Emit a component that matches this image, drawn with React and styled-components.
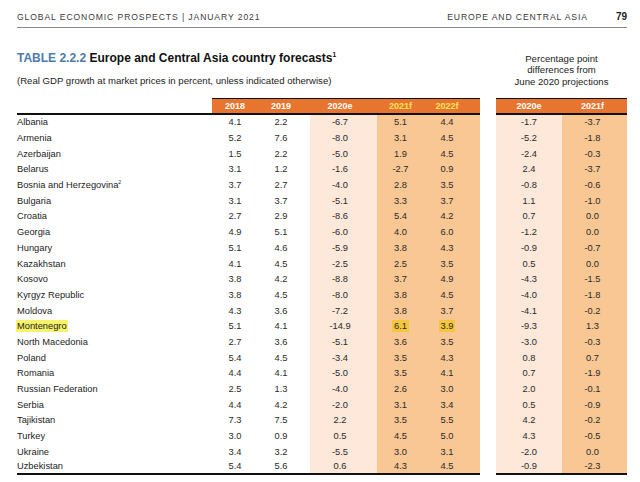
import React from 'react'
import styled, { createGlobalStyle, css } from 'styled-components'

const rows = [
  ['Albania', '4.1', '2.2', '-6.7', '5.1', '4.4', '-1.7', '-3.7'],
  ['Armenia', '5.2', '7.6', '-8.0', '3.1', '4.5', '-5.2', '-1.8'],
  ['Azerbaijan', '1.5', '2.2', '-5.0', '1.9', '4.5', '-2.4', '-0.3'],
  ['Belarus', '3.1', '1.2', '-1.6', '-2.7', '0.9', '2.4', '-3.7'],
  ['Bosnia and Herzegovina', '3.7', '2.7', '-4.0', '2.8', '3.5', '-0.8', '-0.6'],
  ['Bulgaria', '3.1', '3.7', '-5.1', '3.3', '3.7', '1.1', '-1.0'],
  ['Croatia', '2.7', '2.9', '-8.6', '5.4', '4.2', '0.7', '0.0'],
  ['Georgia', '4.9', '5.1', '-6.0', '4.0', '6.0', '-1.2', '0.0'],
  ['Hungary', '5.1', '4.6', '-5.9', '3.8', '4.3', '-0.9', '-0.7'],
  ['Kazakhstan', '4.1', '4.5', '-2.5', '2.5', '3.5', '0.5', '0.0'],
  ['Kosovo', '3.8', '4.2', '-8.8', '3.7', '4.9', '-4.3', '-1.5'],
  ['Kyrgyz Republic', '3.8', '4.5', '-8.0', '3.8', '4.5', '-4.0', '-1.8'],
  ['Moldova', '4.3', '3.6', '-7.2', '3.8', '3.7', '-4.1', '-0.2'],
  ['Montenegro', '5.1', '4.1', '-14.9', '6.1', '3.9', '-9.3', '1.3'],
  ['North Macedonia', '2.7', '3.6', '-5.1', '3.6', '3.5', '-3.0', '-0.3'],
  ['Poland', '5.4', '4.5', '-3.4', '3.5', '4.3', '0.8', '0.7'],
  ['Romania', '4.4', '4.1', '-5.0', '3.5', '4.1', '0.7', '-1.9'],
  ['Russian Federation', '2.5', '1.3', '-4.0', '2.6', '3.0', '2.0', '-0.1'],
  ['Serbia', '4.4', '4.2', '-2.0', '3.1', '3.4', '0.5', '-0.9'],
  ['Tajikistan', '7.3', '7.5', '2.2', '3.5', '5.5', '4.2', '-0.2'],
  ['Turkey', '3.0', '0.9', '0.5', '4.5', '5.0', '4.3', '-0.5'],
  ['Ukraine', '3.4', '3.2', '-5.5', '3.0', '3.1', '-2.0', '0.0'],
  ['Uzbekistan', '5.4', '5.6', '0.6', '4.3', '4.5', '-0.9', '-2.3'],
]

const leftCols = [
  { label: '2018', width: 46, tone: 'plain', pr: 0 },
  { label: '2019', width: 52, tone: 'plain', pr: 6 },
  { label: '2020e', width: 67, tone: 'light', pr: 7 },
  { label: '2021f', width: 47, tone: 'dark', pr: 0, gold: true },
  { label: '2022f', width: 56, tone: 'dark', pr: 10, gold: true },
]

const rightCols = [
  { label: '2020e', width: 66, tone: 'light', pr: 0 },
  { label: '2021f', width: 65, tone: 'dark', pr: 4 },
]

const tones = {
  plain: 'transparent',
  light: '#fde8d9',
  dark: '#f8c793',
}

const GlobalStyle = createGlobalStyle`
  html, body {
    margin: 0;
    padding: 0;
    background: #fff;
  }
  body {
    font-family: "Liberation Sans", Arial, sans-serif;
    color: #1c1c1c;
  }
`

const Page = styled.div`
  width: 640px;
  height: 482px;
  box-sizing: border-box;
  padding: 0 13px 0 17px;
  overflow: hidden;
`

const RunningHead = styled.header`
  display: flex;
  justify-content: space-between;
  align-items: center;
  padding: 12px 0 5px;
  line-height: 10px;
  border-bottom: 1px solid #8a8a8a;
`

const HeadText = styled.span`
  font-size: 8.6px;
  letter-spacing: 0.9px;
  color: #3a3a3a;
`

const HeadRight = styled.div`
  display: flex;
  align-items: center;
  gap: 28px;
`

const PageNo = styled.span`
  font-size: 10px;
  font-weight: bold;
  color: #222;
`

const Layout = styled.div`
  display: grid;
  grid-template-columns: 463px 131px;
  column-gap: 16px;
`

const TitleBlock = styled.div`
  padding: 23px 0 11px;
`

const Title = styled.h1`
  margin: 0;
  font-size: 12px;
  line-height: 15px;
  font-weight: bold;
  color: #111;
`

const TableNo = styled.span`
  color: #4c7bab;
`

const Sup = styled.sup`
  font-size: 0.55em;
  line-height: 0;
  vertical-align: 0.7em;
`

const Subtitle = styled.p`
  margin: 8.5px 0 0;
  font-size: 9.6px;
  line-height: 12px;
  color: #222;
`

const Caption = styled.p`
  margin: 24.5px 0 0;
  text-align: center;
  font-size: 9.6px;
  line-height: 11.7px;
  color: #222;
`

const Table = styled.table`
  border-collapse: separate;
  border-spacing: 0;
  table-layout: fixed;
  width: ${p => p.$width}px;
`

const HeadCell = styled.th`
  box-sizing: border-box;
  height: 17px;
  padding: 0 ${p => p.$pr || 0}px 0 0;
  font-size: 9px;
  font-weight: bold;
  text-align: center;
  border-bottom: 2px solid #111;
  ${p => p.$blank
    ? css`
      background: #fff;
      border-top: 1.5px solid #fff;
    `
    : css`
      background: #e8752f;
      border-top: 1.5px solid #111;
      color: ${p.$gold ? '#ffe25a' : '#fff'};
    `}
`

const Row = styled.tr`
  height: 15.7px;
  &:last-child td {
    border-bottom: 2.5px solid #111;
  }
`

const NameCell = styled.td`
  padding: 0;
  font-size: 9.3px;
  color: #1c1c1c;
  white-space: nowrap;
`

const Marked = styled.span`
  background: #f7f36a;
  padding: 1px 1px;
  margin-left: -1px;
`

const NumCell = styled.td`
  padding: 0 ${p => p.$pr || 0}px 0 0;
  font-size: 9.3px;
  color: #2a2a2a;
  text-align: center;
  background: ${p => tones[p.$tone]};
`

const Gold = styled.span`
  background: #f4c63e;
  padding: 1px 2px;
`

const goldCells = { Montenegro: [3, 4] }

function Cols({ cols }) {
  return (
    <colgroup>
      {cols.map((c, i) => <col key={i} style={{ width: c.width }} />)}
    </colgroup>
  )
}

export default function App() {
  return (
    <Page>
      <GlobalStyle />
      <RunningHead>
        <HeadText>GLOBAL ECONOMIC PROSPECTS | JANUARY 2021</HeadText>
        <HeadRight>
          <HeadText>EUROPE AND CENTRAL ASIA</HeadText>
          <PageNo>79</PageNo>
        </HeadRight>
      </RunningHead>
      <Layout>
        <TitleBlock>
          <Title>
            <TableNo>TABLE 2.2.2</TableNo> Europe and Central Asia country forecasts<Sup>1</Sup>
          </Title>
          <Subtitle>(Real GDP growth at market prices in percent, unless indicated otherwise)</Subtitle>
        </TitleBlock>
        <Caption>
          Percentage point<br />differences from<br />June 2020 projections
        </Caption>

        <Table $width={463}>
          <Cols cols={[{ width: 195 }, ...leftCols]} />
          <thead>
            <tr>
              <HeadCell $blank />
              {leftCols.map(c => (
                <HeadCell key={c.label} $pr={c.pr} $gold={c.gold}>{c.label}</HeadCell>
              ))}
            </tr>
          </thead>
          <tbody>
            {rows.map(r => (
              <Row key={r[0]}>
                <NameCell>
                  {r[0] === 'Montenegro' ? <Marked>{r[0]}</Marked> : r[0]}
                  {r[0].startsWith('Bosnia') && <Sup>2</Sup>}
                </NameCell>
                {leftCols.map((c, i) => (
                  <NumCell key={c.label} $tone={c.tone} $pr={c.pr}>
                    {goldCells[r[0]]?.includes(i) ? <Gold>{r[i + 1]}</Gold> : r[i + 1]}
                  </NumCell>
                ))}
              </Row>
            ))}
          </tbody>
        </Table>

        <Table $width={131}>
          <Cols cols={rightCols} />
          <thead>
            <tr>
              {rightCols.map(c => (
                <HeadCell key={c.label} $pr={c.pr}>{c.label}</HeadCell>
              ))}
            </tr>
          </thead>
          <tbody>
            {rows.map(r => (
              <Row key={r[0]}>
                {rightCols.map((c, i) => (
                  <NumCell key={c.label} $tone={c.tone} $pr={c.pr}>{r[i + 6]}</NumCell>
                ))}
              </Row>
            ))}
          </tbody>
        </Table>
      </Layout>
    </Page>
  )
}
